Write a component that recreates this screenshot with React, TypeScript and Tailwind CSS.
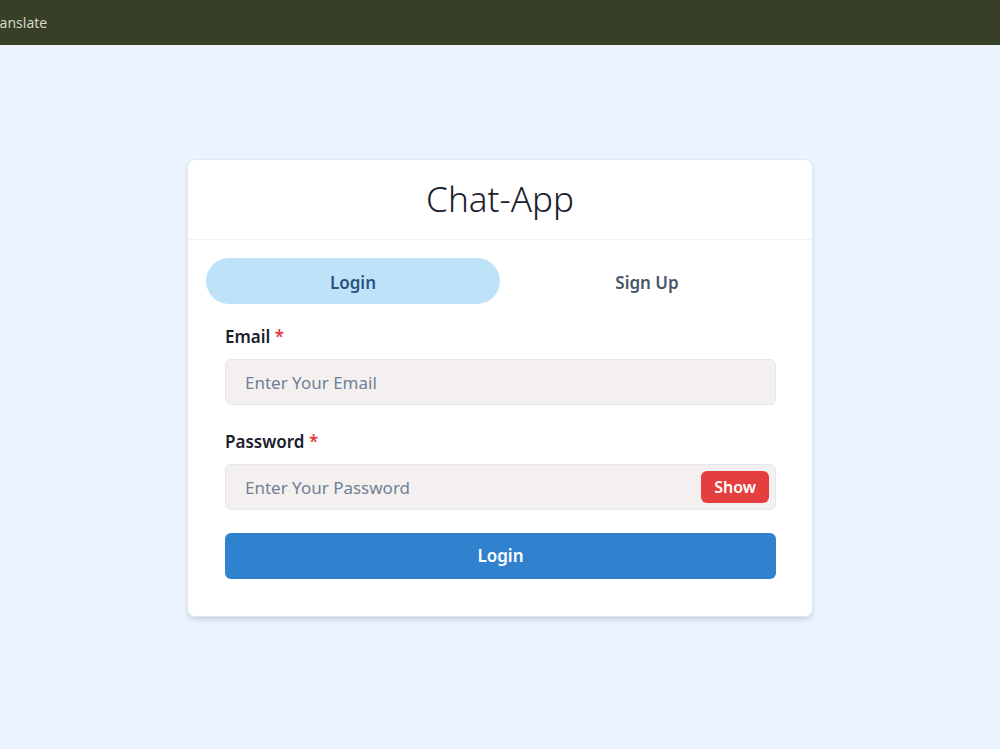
import { useState } from "react";

const font = { fontFamily: '"Noto Sans", "Open Sans", Arial, sans-serif' };

const Field = ({
  label,
  placeholder,
  type = "text",
  action,
}: {
  label: string;
  placeholder: string;
  type?: string;
  action?: React.ReactNode;
}) => (
  <div className="flex flex-col">
    <label className="mb-[9px] text-[17px] font-semibold leading-[26px] text-[#1a202c]">
      {label} <span className="text-[#e53e3e]">*</span>
    </label>
    <div className="relative">
      <input
        type={type}
        placeholder={placeholder}
        className="h-[46px] w-full rounded-md border border-[#e2e8f0] bg-[#f4f0f0] pl-[19px] pr-20 text-[17px] text-[#1a202c] outline-none placeholder:text-[#718096]"
      />
      {action}
    </div>
  </div>
);

export default function App() {
  const [tab, setTab] = useState<"login" | "signup">("login");
  const [show, setShow] = useState(false);

  return (
    <div className="min-h-[749px] bg-[#ebf3fe]" style={font}>
      {/* translate bar */}
      <div className="flex h-[45px] items-center overflow-hidden bg-[#373f27]">
        <span className="ml-[-13px] text-[14px] text-[#d6d8c8]">Translate</span>
      </div>

      <div className="flex justify-center pt-[114px]">
        <div className="w-[626px] rounded-lg border border-[#e2e8f0] bg-white shadow-md">
          <div className="flex h-[80px] items-center justify-center border-b border-[#edf2f7]">
            <h1 className="text-[35px] font-light text-[#1a202c]">Chat-App</h1>
          </div>

          <div className="px-[18px] pt-[18px] pb-[37px]">
            <div className="grid grid-cols-2">
              <button
                onClick={() => setTab("login")}
                className={`h-[46px] rounded-full pt-[3px] text-[17px] font-semibold ${
                  tab === "login" ? "bg-[#bee3f8] text-[#2c5282]" : "text-[#4a5568]"
                }`}
              >
                Login
              </button>
              <button
                onClick={() => setTab("signup")}
                className={`h-[46px] rounded-full pt-[3px] text-[17px] font-semibold ${
                  tab === "signup" ? "bg-[#bee3f8] text-[#2c5282]" : "text-[#4a5568]"
                }`}
              >
                Sign Up
              </button>
            </div>

            <div className="flex flex-col gap-[24px] pl-[19px] pr-[18px] pt-[20px]">
              <Field label="Email" placeholder="Enter Your Email" />
              <Field
                label="Password"
                placeholder="Enter Your Password"
                type={show ? "text" : "password"}
                action={
                  <button
                    onClick={() => setShow(!show)}
                    className="absolute right-[7px] top-[7px] h-[32px] rounded-md bg-[#e53e3e] px-[13px] text-[16px] font-semibold text-white"
                  >
                    {show ? "Hide" : "Show"}
                  </button>
                }
              />
              <button className="mt-[-1px] h-[46px] w-full rounded-md bg-[#3182ce] text-[17px] font-semibold text-white">
                Login
              </button>
            </div>
          </div>
        </div>
      </div>
    </div>
  );
}
